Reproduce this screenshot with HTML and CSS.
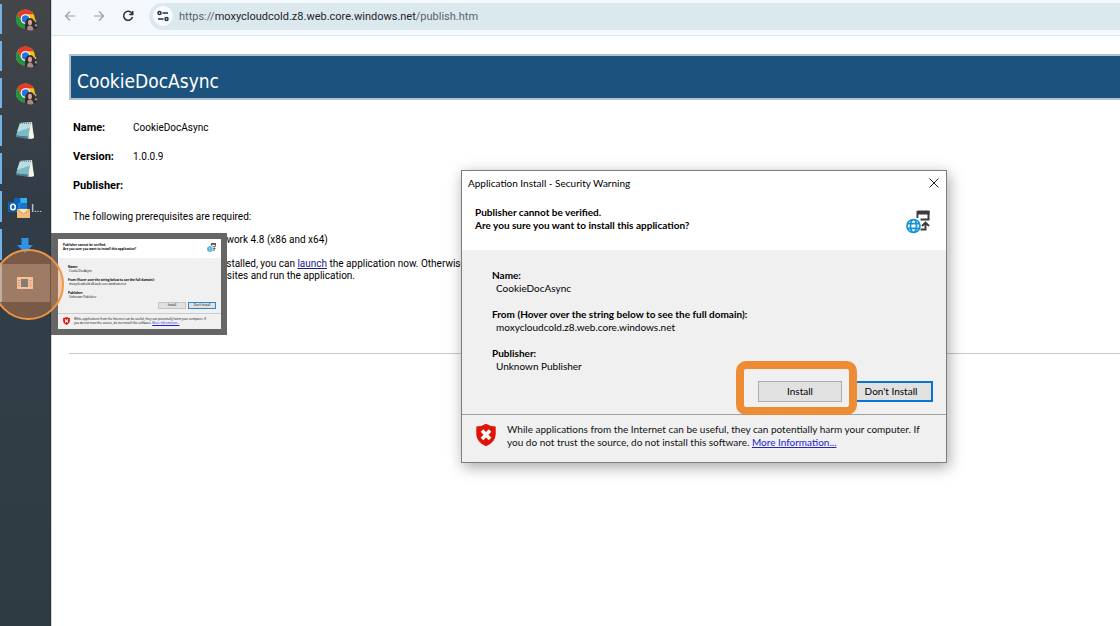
FILE: index.html
```
<!DOCTYPE html>
<html lang="en">
<head>
  <meta charset="UTF-8">
  <title>CookieDocAsync</title>
  <meta name="viewport" content="width=device-width, initial-scale=1">
  <link rel="stylesheet" href="styles.css">
</head>
<body>
  <!-- shared icons -->
  <svg class="defs" aria-hidden="true">
    <symbol id="chrome" viewBox="0 0 22 22">
      <circle cx="9.500" cy="10" r="9.500" fill="#fbc116"/>
      <path d="M1.300 5.200A9.500 9.500 0 0 1 17.700 5.200H9.500A4.800 4.800 0 0 0 5.300 12.300z" fill="#e33b2e"/>
      <path d="M1.300 5.200A9.500 9.500 0 0 0 9.500 19.500L13.700 12.400A4.800 4.800 0 0 1 5.300 12.300z" fill="#229342"/>
      <circle cx="9.500" cy="10" r="4.800" fill="#fff"/>
      <circle cx="9.500" cy="10" r="3.700" fill="#2473e8"/>
      <path d="M9 20.500Q8 9 14 9q3 0 4 3l3 1-1 3 1.500 3-3 1.500z" fill="#332c2c"/>
      <ellipse cx="14" cy="13.500" rx="2" ry="2.800" fill="#d3a294"/>
      <path d="M11 20.500q0-4 3-4t3.500 4.500q-3.500 1-6.500-.5z" fill="#a88a89"/>
      <path d="M18.500 10l2 2-1 2zM18.500 16l2-1v3z" fill="#c6bdb0"/>
    </symbol>
    <symbol id="notepad" viewBox="0 0 20 20">
      <path d="M5 2l12-1 2 16-3 1z" fill="#e8e2d2"/>
      <path d="M5 2l11-.5L13.500 16 1 14.500z" fill="#7fb9c6"/>
      <path d="M5 2l11-.5-.8 5L2 11z" fill="#b8dde2"/>
      <path d="M1 14.500L13.500 16l-.3 2L.8 16z" fill="#4b808d"/>
      <path d="M16 1.500l3 15.500-5.800 1z" fill="#f6f3e9"/>
      <path d="M5 2.200h11.500" stroke="#68777c" stroke-width="1.200" stroke-dasharray="1 1"/>
    </symbol>
    <symbol id="deploy" viewBox="0 0 24 24">
      <path d="M11.500 1.500h11v8h-8" fill="none" stroke="#3b3b3b" stroke-width="2"/>
      <path d="M10.500 1h13v3.500h-13zM10.500 4h1.800v4h-1.800z" fill="#3b3b3b"/>
      <path d="M14.500 19.500h5v-6M16 16l3.500-3.500L23 16" fill="none" stroke="#3b3b3b" stroke-width="1.900"/>
      <circle cx="7.500" cy="16" r="7.500" fill="#fff"/>
      <g fill="none" stroke="#1595d4" stroke-width="1.700">
        <circle cx="7.500" cy="16" r="6.500"/>
        <ellipse cx="7.500" cy="16" rx="3" ry="6.500"/>
        <path d="M1.500 13.700h12M1.500 18.300h12"/>
      </g>
    </symbol>
    <symbol id="shield" viewBox="0 0 20 23">
      <path d="M10 .3Q14 3 19.700 3V11Q19.300 19 10 22.700.7 19 .3 11V3Q6 3 10 .3z" fill="#dd1509"/>
      <path d="M6 7l8 8.500M14 7l-8 8.500" stroke="#fff" stroke-width="3.600"/>
    </symbol>
  </svg>

  <nav class="taskbar" aria-label="Taskbar">
    <button class="task chrome" aria-label="Chrome"><svg class="task-icon"><use href="#chrome"/></svg></button>
    <button class="task chrome" aria-label="Chrome"><svg class="task-icon"><use href="#chrome"/></svg></button>
    <button class="task chrome" aria-label="Chrome"><svg class="task-icon"><use href="#chrome"/></svg></button>
    <button class="task" aria-label="Notepad"><svg class="task-icon small"><use href="#notepad"/></svg></button>
    <button class="task" aria-label="Notepad"><svg class="task-icon small"><use href="#notepad"/></svg></button>
    <button class="task outlook">
      <svg class="task-icon" viewBox="0 0 22 22">
        <path d="M6 1h13v12H6z" fill="#1c84d8"/>
        <path d="M6 1h6.500v5H6z" fill="#0d62b5"/>
        <path d="M12.500 1H19v5h-6.500z" fill="#35b1ee"/>
        <path d="M12.500 6H19v5h-6.500z" fill="#1675cb"/>
        <path d="M0 5h10v10H0z" fill="#0f5fb4"/>
        <ellipse cx="5" cy="10" rx="2.300" ry="2.800" fill="none" stroke="#fff" stroke-width="1.500"/>
        <path d="M9 12h13v9H9z" fill="#f3bd78"/>
        <path d="M9 12l6.500 5 6.500-5" fill="#ffe0ae" stroke="#c58a48" stroke-width=".8"/>
      </svg>
      <span>I...</span>
    </button>
    <button class="task" aria-label="Downloads">
      <svg class="task-icon small" viewBox="0 0 20 20"><path d="M6.500 3h7v7H18l-8 8-8-8h4.500z" fill="#2f93ea"/></svg>
    </button>
    <button class="task active" aria-label="Application Install">
      <svg class="task-icon small" viewBox="0 0 20 20">
        <path d="M2 4h16v12H2z" fill="#fbe3cd"/>
        <path d="M6 6h7v8H6z" fill="#40738f"/>
        <path d="M3 7.500h2M3 10h2M3 12.500h2M14.500 7.500h2M14.500 10h2M14.500 12.500h2" stroke="#c49a7b"/>
      </svg>
    </button>

    <!-- window preview -->
    <div class="preview">
      <div class="preview-window">
        <div class="preview-head">
          <div>Publisher cannot be verified.<br>Are you sure you want to install this application?</div>
          <svg class="preview-deploy"><use href="#deploy"/></svg>
        </div>
        <div class="preview-body">
          <dl>
            <dt>Name:</dt><dd>CookieDocAsync</dd>
            <dt>From (Hover over the string below to see the full domain):</dt><dd>moxycloudcold.z8.web.core.windows.net</dd>
            <dt>Publisher:</dt><dd>Unknown Publisher</dd>
          </dl>
          <div class="preview-actions"><span>Install</span><span class="focused">Don't Install</span></div>
        </div>
        <div class="preview-foot">
          <svg class="preview-shield"><use href="#shield"/></svg>
          <div>While applications from the Internet can be useful, they can potentially harm your computer. If<br>you do not trust the source, do not install this software. <u>More Information...</u></div>
        </div>
      </div>
    </div>
    <div class="click-ring"></div>
  </nav>

  <div class="browser">
    <header class="toolbar">
      <button class="tool" aria-label="Back"><svg viewBox="0 0 12 12"><path d="M11 6H1.500M6 1.500L1.500 6 6 10.500"/></svg></button>
      <button class="tool" aria-label="Forward"><svg viewBox="0 0 12 12"><path d="M1 6h9.500M6 1.500L10.500 6 6 10.500"/></svg></button>
      <button class="tool dark" aria-label="Reload"><svg viewBox="0 0 12 12"><path d="M10 3.500A4.500 4.500 0 1 0 10.500 7M10.700 1v3.500H7.200"/></svg></button>
      <div class="address">
        <button class="site-info" aria-label="Site information">
          <svg viewBox="0 0 12 12"><path d="M5.500 3H11M1 9h5.500"/><circle cx="2.500" cy="3" r="1.500"/><circle cx="9.500" cy="9" r="1.500"/></svg>
        </button>
        <div class="url">https://<b>moxycloudcold.z8.web.core.windows.net</b>/publish.htm</div>
      </div>
    </header>

    <main class="page">
      <h1>CookieDocAsync</h1>
      <div class="details">
        <dl class="facts">
          <dt>Name:</dt><dd>CookieDocAsync</dd>
          <dt>Version:</dt><dd>1.0.0.9</dd>
          <dt>Publisher:</dt><dd></dd>
        </dl>
        <p>The following prerequisites are required:</p>
        <ul><li>Microsoft .NET Framework 4.8 (x86 and x64)</li></ul>
        <p>If these components are already installed, you can <a href="#">launch</a> the application now. Otherwise, click the<br>button below to install the prerequisites and run the application.</p>
      </div>
      <hr>
    </main>
  </div>

  <div class="dialog" role="dialog" aria-labelledby="dialogTitle">
    <div class="dialog-title">
      <span id="dialogTitle">Application Install - Security Warning</span>
      <button class="close" aria-label="Close"><svg viewBox="0 0 10 10"><path d="M.5.500l9 9M9.500.500l-9 9"/></svg></button>
    </div>
    <div class="dialog-head">
      <div>Publisher cannot be verified.<br>Are you sure you want to install this application?</div>
      <svg class="deploy"><use href="#deploy"/></svg>
    </div>
    <div class="dialog-body">
      <dl>
        <dt>Name:</dt><dd>CookieDocAsync</dd>
        <dt>From (Hover over the string below to see the full domain):</dt><dd>moxycloudcold.z8.web.core.windows.net</dd>
        <dt>Publisher:</dt><dd>Unknown Publisher</dd>
      </dl>
      <div class="actions">
        <div class="marked"><button class="btn">Install</button></div>
        <button class="btn focused">Don't Install</button>
      </div>
    </div>
    <div class="dialog-foot">
      <svg class="shield"><use href="#shield"/></svg>
      <div>While applications from the Internet can be useful, they can potentially harm your computer. If<br>you do not trust the source, do not install this software. <a href="#">More Information...</a></div>
    </div>
  </div>
</body>
</html>
```

FILE: styles.css
```
* { box-sizing: border-box; }

body {
  margin: 0;
  min-height: 100vh;
  display: flex;
  position: relative;
  overflow: hidden;
  background: #fff;
  color: #000;
  font-family: Roboto, sans-serif;
  font-size: 10px;
}
button {
  margin: 0;
  padding: 0;
  border: 0;
  background: none;
  font: inherit;
  color: inherit;
}
svg { display: block; flex: none; }
dl, dd, p, ul { margin: 0; }
.defs { position: absolute; width: 0; height: 0; }

/* taskbar */
.taskbar {
  position: relative;
  z-index: 1;
  flex: none;
  width: 51px;
  padding-top: 1px;
  background: linear-gradient(#444649, #3a4047 18%, #323c47 32%, #313e47 60%, #2c3c42);
  border-right: 1px solid #28323a;
}
.task {
  display: flex;
  align-items: center;
  justify-content: center;
  width: 100%;
  height: 38px;
  position: relative;
  color: #e6e8ea;
}
.task.chrome { height: 37px; padding: 1px 0 0 3px; }
.task::before {
  content: "";
  position: absolute;
  left: 0; top: 3px; bottom: 4px;
  width: 2px;
  background: #71b3e6;
}
.task-icon { width: 22px; height: 22px; }
.task-icon.small { width: 20px; height: 20px; }
.task.outlook { gap: 1px; padding-top: 2px; }
.task.active { background: #6d7277; }
.task.active::before { background: #a4c3d8; top: 0; bottom: 0; }

.click-ring {
  position: absolute;
  left: -7px; top: 249px;
  width: 71px;
  height: 71px;
  border: 2px solid #f09645;
  border-radius: 50%;
  background: rgba(240, 140, 70, .38);
}

/* window preview */
.preview {
  position: absolute;
  left: 51px; top: 233px;
  width: 176px;
  height: 102px;
  padding: 6px 6px 6px 7px;
  background: #666;
  font-family: "Open Sans", sans-serif;
  font-size: 3px;
  line-height: 4px;
}
.preview-window {
  display: flex;
  flex-direction: column;
  height: 100%;
  background: #f0f0f0;
}
.preview-head {
  display: flex;
  justify-content: space-between;
  height: 19px;
  padding: 4px 5px;
  background: #fff;
  font-weight: bold;
}
.preview-deploy { width: 9px; height: 9px; }
.preview-body {
  flex: 1;
  padding: 7px 5px 0 10px;
}
.preview-body dt { font-weight: bold; }
.preview-body dd { padding-left: 1px; margin-bottom: 5px; }
.preview-actions {
  display: flex;
  justify-content: flex-end;
  gap: 2px;
  margin-top: -2px;
}
.preview-actions span {
  width: 28px;
  height: 7px;
  border: 1px solid #c4c4c4;
  background: #e1e1e1;
  text-align: center;
}
.preview-actions .focused { border-color: #2d86d0; }
.preview-foot {
  display: flex;
  gap: 4px;
  height: 16px;
  padding: 3px 5px;
  border-top: 1px solid #ccc;
}
.preview-foot u { color: #22c; }
.preview-shield { width: 7px; height: 8px; }

/* browser */
.browser { flex: 1; min-width: 0; border-left: 1px solid #d5dadd; }
.toolbar {
  display: flex;
  align-items: center;
  height: 36px;
  padding: 0 0 3px 12px;
  background: #f3f9fc;
  border-bottom: 1px solid #dfe4e7;
}
.tool { margin-right: 17px; }
.tool.dark { margin-right: 15px; }
.tool svg, .site-info svg {
  width: 12px;
  height: 12px;
  fill: none;
  stroke: #9a9fa2;
  stroke-width: 1.2;
}
.tool.dark svg, .site-info svg { stroke: #2b3236; stroke-width: 1.5; }
.address {
  flex: 1;
  display: flex;
  align-items: center;
  gap: 6px;
  height: 27px;
  padding-left: 4px;
  border-radius: 14px 0 0 14px;
  background: #dbe9ee;
}
.site-info {
  display: flex;
  align-items: center;
  justify-content: center;
  width: 20px;
  height: 20px;
  border-radius: 50%;
  background: #f6fbfd;
}
.url { font-size: 11px; color: #566268; }
.url b { font-weight: normal; color: #1c2428; }

.page { padding: 18px 0 0 17px; }
h1 {
  margin: 0;
  height: 46px;
  padding: 4px 0 0 6px;
  border: 2px solid #b4c2cd;
  border-right: 0;
  background: #1c527e;
  color: #fff;
  font: 19px/42px "DejaVu Sans Condensed", "DejaVu Sans", sans-serif;
}
.details { padding: 13px 0 0 4px; line-height: 12px; }
.facts {
  display: grid;
  grid-template-columns: 60px 1fr;
}
.facts dt { font-size: 11px; font-weight: bold; }
.facts dt, .facts dd { line-height: 29px; }
.details p { margin-top: 11px; line-height: 12px; }
.details ul { margin-top: 11px; padding-left: 56px; }
.details ul + p { margin-top: 12px; }
a { color: #1a1a8c; }
hr {
  margin: 71px 0 0;
  border: 0;
  border-top: 1px solid #c8c8c8;
}

/* security dialog */
.dialog {
  position: absolute;
  z-index: 2;
  left: 461px; top: 170px;
  width: 486px;
  border: 1px solid #7d7d7d;
  background: #f0f0f0;
  box-shadow: 2px 4px 14px rgba(0, 0, 0, .35);
  font-family: Lato, sans-serif;
  line-height: 13px;
}
.dialog-title {
  display: flex;
  justify-content: space-between;
  align-items: center;
  height: 24px;
  padding: 0 7px 0 6px;
  background: #fff;
}
.close svg {
  width: 10px;
  height: 10px;
  fill: none;
  stroke: #222;
}
.dialog-head {
  display: flex;
  justify-content: space-between;
  height: 55px;
  padding: 11px 16px 0 13px;
  background: #fff;
  font-weight: bold;
}
.deploy { width: 24px; height: 24px; margin-top: 4px; }
.dialog-body { padding: 19px 13px 12px 30px; }
.dialog-body dt { font-weight: bold; }
.dialog-body dd { padding-left: 4px; margin-bottom: 13px; }
.dialog-body dd:last-child { margin-bottom: 8px; }
.actions {
  display: flex;
  justify-content: flex-end;
  gap: 7px;
}
.btn {
  display: block;
  width: 84px;
  height: 21px;
  border: 1px solid #adadad;
  background: #e1e1e1;
}
.btn.focused { border: 2px solid #0a75d0; }
.marked { position: relative; }
.marked::after {
  content: "";
  position: absolute;
  left: -22px; top: -20px; right: -15px; bottom: -13px;
  border: 8px solid #ee8c35;
  border-radius: 10px;
}
.dialog-foot {
  display: flex;
  gap: 11px;
  padding: 8px 14px 13px;
  border-top: 1px solid #a0a0a0;
  color: #111;
}
.dialog-foot a { color: #2424c8; }
.shield { width: 20px; height: 24px; }
```
